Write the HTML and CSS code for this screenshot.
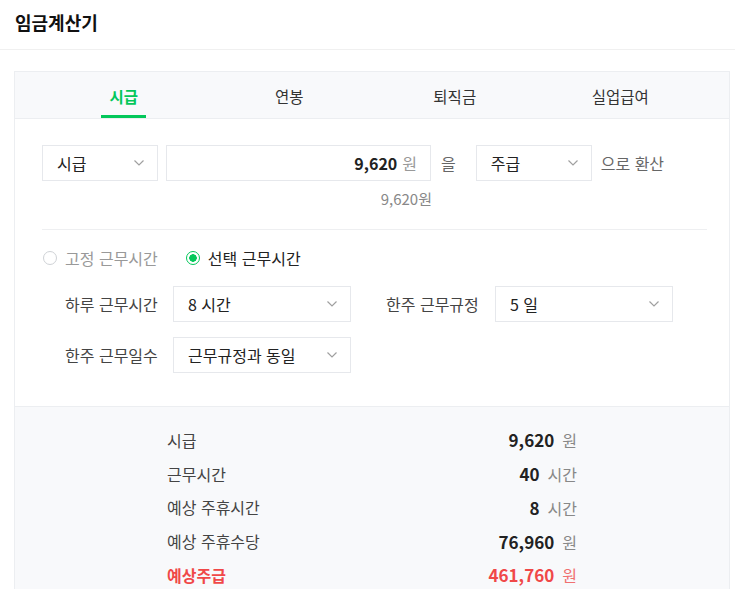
FILE: index.html
```html
<!DOCTYPE html>
<html lang="ko">
<head>
<meta charset="utf-8">
<title>임금계산기</title>
<link rel="stylesheet" href="styles.css">
</head>
<body>
<header class="header"><h1 class="title">임금계산기</h1></header>
<section class="card">
  <nav class="tabs">
    <div class="tab"><span class="tab-label active">시급</span></div>
    <div class="tab"><span class="tab-label">연봉</span></div>
    <div class="tab"><span class="tab-label">퇴직금</span></div>
    <div class="tab"><span class="tab-label">실업급여</span></div>
  </nav>
  <div class="form">
    <div class="convert-row">
      <div class="select sel-small"><span>시급</span><svg class="chev" width="10" height="6" viewBox="0 0 10 6"><polyline points="0.5,0.5 5,5 9.5,0.5" fill="none" stroke="#a0a0a0" stroke-width="1.2"/></svg></div>
      <div class="amount"><span class="amount-num">9,620</span><span class="amount-unit">원</span></div>
      <span class="conn">을</span>
      <div class="select sel-small sel-target"><span>주급</span><svg class="chev" width="10" height="6" viewBox="0 0 10 6"><polyline points="0.5,0.5 5,5 9.5,0.5" fill="none" stroke="#a0a0a0" stroke-width="1.2"/></svg></div>
      <span class="conn2">으로 환산</span>
    </div>
    <div class="sub">9,620원</div>
    <div class="divider"></div>
    <div class="radios">
      <label class="radio"><span class="dot"></span><span class="radio-text">고정 근무시간</span></label>
      <label class="radio on"><span class="dot"></span><span class="radio-text">선택 근무시간</span></label>
    </div>
    <div class="grid">
      <span class="lbl">하루 근무시간</span>
      <div class="select sel-wide"><span>8 시간</span><svg class="chev" width="10" height="6" viewBox="0 0 10 6"><polyline points="0.5,0.5 5,5 9.5,0.5" fill="none" stroke="#a0a0a0" stroke-width="1.2"/></svg></div>
      <span class="lbl lbl2">한주 근무규정</span>
      <div class="select sel-wide sel-right"><span>5 일</span><svg class="chev" width="10" height="6" viewBox="0 0 10 6"><polyline points="0.5,0.5 5,5 9.5,0.5" fill="none" stroke="#a0a0a0" stroke-width="1.2"/></svg></div>
      <span class="lbl">한주 근무일수</span>
      <div class="select sel-wide"><span>근무규정과 동일</span><svg class="chev" width="10" height="6" viewBox="0 0 10 6"><polyline points="0.5,0.5 5,5 9.5,0.5" fill="none" stroke="#a0a0a0" stroke-width="1.2"/></svg></div>
    </div>
  </div>
  <div class="results">
    <div class="res-row"><span class="res-label">시급</span><span class="res-val"><b>9,620</b><span class="unit">원</span></span></div>
    <div class="res-row"><span class="res-label">근무시간</span><span class="res-val"><b>40</b><span class="unit">시간</span></span></div>
    <div class="res-row"><span class="res-label">예상 주휴시간</span><span class="res-val"><b>8</b><span class="unit">시간</span></span></div>
    <div class="res-row"><span class="res-label">예상 주휴수당</span><span class="res-val"><b>76,960</b><span class="unit">원</span></span></div>
    <div class="res-row total"><span class="res-label">예상주급</span><span class="res-val"><b>461,760</b><span class="unit">원</span></span></div>
  </div>
</section>
</body>
</html>
```
FILE: styles.css
```css
* { box-sizing: border-box; }
html, body { margin: 0; padding: 0; background: #fff; }
body {
  font-family: "Noto Sans CJK KR", "Noto Sans", sans-serif;
  color: #333;
  font-size: 16px;
  overflow: hidden;
}
.header {
  height: 50px;
  border-bottom: 1px solid #f0f0f0;
  padding-left: 15px;
}
.title {
  margin: 0;
  font-size: 18px;
  font-weight: 700;
  line-height: 44px;
  color: #111;
}
.card {
  margin: 21px 5px 0 14px;
  border: 1px solid #eceef1;
  border-bottom: none;
}
.tabs {
  display: grid;
  grid-template-columns: repeat(4, 1fr);
  padding: 0 26px;
  height: 47px;
  background: #f8f9fb;
  border-bottom: 1px solid #eceef1;
}
.tab { display: flex; justify-content: center; }
.tab-label {
  display: flex;
  align-items: center;
  height: 46px;
  padding: 4px 8px 0;
  border-bottom: 3px solid transparent;
  color: #333;
  font-size: 15.5px;
}
.tab-label.active {
  color: #03c75a;
  font-weight: 700;
  border-bottom-color: #03c75a;
}
.form { padding: 26px 22px 33px 27px; }
.convert-row { display: flex; align-items: center; height: 36px; }
.select {
  display: flex;
  align-items: center;
  justify-content: space-between;
  height: 36px;
  border: 1px solid #e6e8ec;
  background: #fff;
  padding: 0 13px 0 14px;
  color: #222;
}
.sel-small { width: 116px; }
.amount {
  width: 265px;
  height: 36px;
  margin-left: 8px;
  border: 1px solid #e6e8ec;
  display: flex;
  align-items: center;
  justify-content: flex-end;
  padding-right: 13px;
}
.amount-num { font-weight: 700; color: #222; }
.amount-unit { color: #999; margin-left: 5px; }
.conn { margin-left: 10px; color: #666; }
.sel-target { margin-left: 20px; }
.conn2 { margin-left: 9px; color: #666; }
.sub {
  margin: 8px 0 0 124px;
  width: 266px;
  text-align: right;
  line-height: 20px;
  font-size: 15px;
  color: #888;
}
.divider { margin-top: 20px; height: 1px; background: #eeeff1; }
.radios { display: flex; align-items: center; gap: 28px; margin-top: 18px; height: 20px; padding-left: 1px; }
.radio { display: flex; align-items: center; gap: 8px; }
.dot {
  width: 14px; height: 14px;
  border-radius: 50%;
  border: 1px solid #cfd2d6;
  background: #fff;
}
.radio-text { color: #999; }
.radio.on .dot {
  border: 1.5px solid #03c75a;
  background: radial-gradient(circle, #03c75a 0 3.5px, #fff 4px);
}
.radio.on .radio-text { color: #222; }
.grid {
  display: grid;
  grid-template-columns: 93px 178px 93px 178px;
  row-gap: 15px;
  column-gap: 15px;
  align-items: center;
  margin-top: 18px;
  padding-left: 23px;
}
.lbl { color: #444; white-space: nowrap; }
.lbl2 { margin-left: 20px; }
.sel-right { margin-left: 21px; }
.sel-wide { width: 178px; }
.results {
  background: #f8f9fb;
  border-top: 1px solid #eceef1;
  padding: 16px 152px 20px;
}
.res-row {
  display: flex;
  justify-content: space-between;
  align-items: center;
  height: 33.75px;
}
.res-label { color: #444; }
.res-val b { font-size: 17px; font-weight: 700; color: #222; }
.unit { margin-left: 8px; color: #888; font-size: 16px; }
.total .res-label { color: #f04848; font-weight: 700; }
.total .res-val b { color: #f04848; }
.total .unit { color: #f07070; }
```
